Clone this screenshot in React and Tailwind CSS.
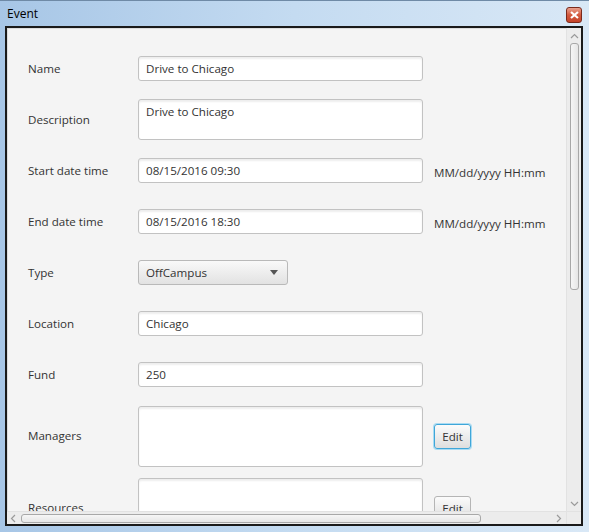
import React from 'react';

const font = { fontFamily: '"Open Sans", "Noto Sans", sans-serif' };

function Field({ value, h = 'h-[25px]' }) {
  return (
    <div className={`w-[285px] ${h} bg-white border border-[#c2c2c2] rounded-[3px] shadow-[inset_0_2px_2px_rgba(0,0,0,0.07)] px-[7px] pt-[3px] text-[11.6px] text-[#333] leading-[17px]`}>
      {value}
    </div>
  );
}

function EditButton({ focused }) {
  return (
    <button
      className={`h-[25px] w-[37px] rounded-[3px] text-[11.6px] text-[#333] bg-gradient-to-b from-[#fbfbfb] to-[#dedede] ${
        focused ? 'border border-[#3fa6d8] shadow-[0_0_0_1px_#a9dbf3]' : 'border border-[#b5b5b5]'
      }`}
    >
      Edit
    </button>
  );
}

function Row({ label, top, height, children, extra }) {
  return (
    <div className={`absolute left-0 right-0 flex items-center ${top} ${height}`}>
      <div className="w-[130px] pl-[20px] text-[11.6px] text-[#333]">{label}</div>
      {children}
      {extra && <div className="ml-[11px]">{extra}</div>}
    </div>
  );
}

const hint = <span className="text-[11.6px] text-[#333]">MM/dd/yyyy HH:mm</span>;

export default function App() {
  return (
    <div className="w-[589px] h-[532px] relative bg-gradient-to-r from-[#a7c6e6] via-[#c4dbf1] to-[#d9e8f6] border-t border-[#6f8aa6]" style={font}>
      {/* title bar */}
      <div className="h-[25px] flex items-center justify-between pl-[7px] pr-[7px]">
        <span className="text-[12px] text-black">Event</span>
        <div className="w-[16px] h-[16px] mt-[3px] rounded-[3px] border border-[#7a2a1c] bg-gradient-to-b from-[#e8a08e] via-[#d3593d] to-[#c5432a] flex items-center justify-center">
          <svg width="9" height="8" viewBox="0 0 9 8">
            <path d="M1 1 L8 7 M8 1 L1 7" stroke="#fff" strokeWidth="2.2" />
          </svg>
        </div>
      </div>

      {/* client area */}
      <div className="absolute left-[5px] top-[25px] w-[578px] h-[500px] border-2 border-[#1a1a1a] bg-[#f4f4f4] flex">
        <div className="flex flex-col flex-1">
          <div className="flex flex-1">
            {/* viewport */}
            <div className="relative flex-1 overflow-hidden border-l border-t border-[#dcdcdc]">
              <Row label="Name" top="top-[14px]" height="h-[51px]">
                <Field value="Drive to Chicago" />
              </Row>
              <Row label="Description" top="top-[65px]" height="h-[51px]">
                <Field value="Drive to Chicago" h="h-[41px]" />
              </Row>
              <Row label="Start date time" top="top-[116px]" height="h-[51px]" extra={hint}>
                <Field value="08/15/2016 09:30" />
              </Row>
              <Row label="End date time" top="top-[167px]" height="h-[51px]" extra={hint}>
                <Field value="08/15/2016 18:30" />
              </Row>
              <Row label="Type" top="top-[218px]" height="h-[51px]">
                <div className="w-[150px] h-[25px] rounded-[3px] border border-[#b9b9b9] bg-gradient-to-b from-[#f9f9f9] to-[#e2e2e2] flex items-center justify-between pl-[7px] pr-[9px] text-[11.6px] text-[#333]">
                  <span>OffCampus</span>
                  <svg width="8" height="5" viewBox="0 0 8 5">
                    <path d="M0 0 H8 L4 5 Z" fill="#555" />
                  </svg>
                </div>
              </Row>
              <Row label="Location" top="top-[269px]" height="h-[51px]">
                <Field value="Chicago" />
              </Row>
              <Row label="Fund" top="top-[320px]" height="h-[51px]">
                <Field value="250" />
              </Row>
              <Row label="Managers" top="top-[372px]" height="h-[70px]" extra={<EditButton focused />}>
                <Field value="" h="h-[61px]" />
              </Row>
              <Row label="Resources" top="top-[444px]" height="h-[70px]" extra={<EditButton />}>
                <Field value="" h="h-[61px]" />
              </Row>
            </div>
            {/* vertical scrollbar */}
            <div className="w-[15px] bg-[#ececec] flex flex-col items-center border-l border-[#e2e2e2]">
              <svg width="9" height="6" viewBox="0 0 9 6" className="mt-[5px]">
                <path d="M1 5 L4.5 1.5 L8 5" stroke="#9a9a9a" strokeWidth="1.2" fill="none" />
              </svg>
              <div className="mt-[4px] w-[9px] h-[247px] rounded-[3px] border border-[#a8a8a8] bg-gradient-to-r from-[#f6f6f6] to-[#e6e6e6]" />
              <div className="flex-1" />
              <svg width="9" height="6" viewBox="0 0 9 6" className="mb-[4px]">
                <path d="M1 1 L4.5 4.5 L8 1" stroke="#9a9a9a" strokeWidth="1.2" fill="none" />
              </svg>
            </div>
          </div>
          {/* horizontal scrollbar */}
          <div className="h-[13px] flex">
            <div className="flex-1 bg-[#ececec] flex items-center border-t border-[#e2e2e2]">
              <svg width="6" height="9" viewBox="0 0 6 9" className="ml-[3px]">
                <path d="M5 1 L1.5 4.5 L5 8" stroke="#9a9a9a" strokeWidth="1.2" fill="none" />
              </svg>
              <div className="ml-[5px] w-[460px] h-[9px] rounded-[3px] border border-[#a8a8a8] bg-gradient-to-b from-[#f6f6f6] to-[#e6e6e6]" />
              <div className="flex-1" />
              <svg width="6" height="9" viewBox="0 0 6 9" className="mr-[4px]">
                <path d="M1 1 L4.5 4.5 L1 8" stroke="#9a9a9a" strokeWidth="1.2" fill="none" />
              </svg>
            </div>
            <div className="w-[15px] bg-[#ececec] border-t border-l border-[#e2e2e2]" />
          </div>
        </div>
      </div>
    </div>
  );
}
